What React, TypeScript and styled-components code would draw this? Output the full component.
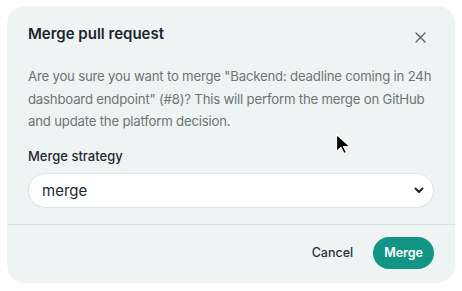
import React from "react";
import styled, { createGlobalStyle } from "styled-components";

const Global = createGlobalStyle`
  html, body { margin: 0; padding: 0; background: #ffffff; }
  body { font-family: Inter, "Noto Sans", "Liberation Sans", sans-serif; -webkit-font-smoothing: antialiased; }
  * { box-sizing: border-box; }
`;

const Page = styled.div`
  position: relative;
  width: 462px;
  height: 291px;
  padding: 6px 7px;
`;

const Dialog = styled.div`
  width: 448px;
  height: 277px;
  background: #eef4f3;
  border-radius: 18px;
  display: flex;
  flex-direction: column;
`;

const Header = styled.div`
  display: flex;
  align-items: center;
  justify-content: space-between;
  padding: 15px 25px 0 21px;
`;

const Title = styled.h2`
  margin: 0;
  font-size: 15px;
  line-height: 20px;
  font-weight: 600;
  color: #1b2431;
`;

const CloseButton = styled.button`
  border: 0;
  background: none;
  padding: 0;
  width: 20px;
  height: 20px;
  display: flex;
  align-items: center;
  justify-content: center;
  margin-top: 6px;
  color: #5b6670;
`;

const Body = styled.div`
  padding: 18px 20px 0 21px;
  display: flex;
  flex-direction: column;
`;

const Message = styled.p`
  margin: 0;
  font-size: 13.2px;
  line-height: 22.5px;
  letter-spacing: -0.2px;
  color: #6b7673;
`;

const Label = styled.label`
  margin-top: 14px;
  font-size: 13px;
  line-height: 18px;
  font-weight: 500;
  color: #1f2733;
`;

const SelectWrap = styled.div`
  margin-top: 8px;
  height: 35px;
  margin-right: 1px;
  border-radius: 18px;
  background: #ffffff;
  border: 1px solid #d6e5e1;
  display: flex;
  align-items: center;
  justify-content: space-between;
  padding: 0 9px 0 13px;
  font-size: 15px;
  color: #1f2733;
`;

const Divider = styled.div`
  margin-top: 16px;
  height: 1px;
  background: #d7e4e1;
`;

const Footer = styled.div`
  display: flex;
  justify-content: flex-end;
  align-items: center;
  gap: 20px;
  padding: 12px 21px 0 21px;
`;

const GhostButton = styled.button`
  border: 0;
  background: none;
  padding: 0;
  font-family: inherit;
  font-size: 12.5px;
  font-weight: 500;
  color: #28303c;
`;

const PrimaryButton = styled.button`
  border: 0;
  height: 32px;
  padding: 0 11px;
  border-radius: 16px;
  background: #129584;
  color: #ffffff;
  font-family: inherit;
  font-size: 12.5px;
  font-weight: 600;
`;

const Cursor = styled.svg`
  position: absolute;
  left: 335px;
  top: 133px;
`;

export default function App() {
  return (
    <Page>
      <Global />
      <Dialog>
        <Header>
          <Title>Merge pull request</Title>
          <CloseButton aria-label="Close">
            <svg width="11" height="11" viewBox="0 0 11 11">
              <path d="M1 1L10 10M10 1L1 10" stroke="currentColor" strokeWidth="1.4" strokeLinecap="round" />
            </svg>
          </CloseButton>
        </Header>
        <Body>
          <Message>
            Are you sure you want to merge "Backend: deadline coming in 24h dashboard endpoint" (#8)? This will perform the merge on GitHub and update the platform decision.
          </Message>
          <Label>Merge strategy</Label>
          <SelectWrap>
            <span>merge</span>
            <svg width="10" height="7" viewBox="0 0 10 7">
              <path d="M1.5 1.5L5 5L8.5 1.5" stroke="#1b2431" strokeWidth="2" fill="none" strokeLinecap="round" strokeLinejoin="round" />
            </svg>
          </SelectWrap>
        </Body>
        <Divider />
        <Footer>
          <GhostButton>Cancel</GhostButton>
          <PrimaryButton>Merge</PrimaryButton>
        </Footer>
      </Dialog>
      <Cursor width="18" height="22" viewBox="0 0 18 22">
        <path d="M1.5 1.5L1.5 18.5L6 14.5L9 20.5L11.5 19.5L8.5 13.5L15 13.5Z" fill="#000" stroke="#fff" strokeWidth="1.2" strokeLinejoin="round" />
      </Cursor>
    </Page>
  );
}
